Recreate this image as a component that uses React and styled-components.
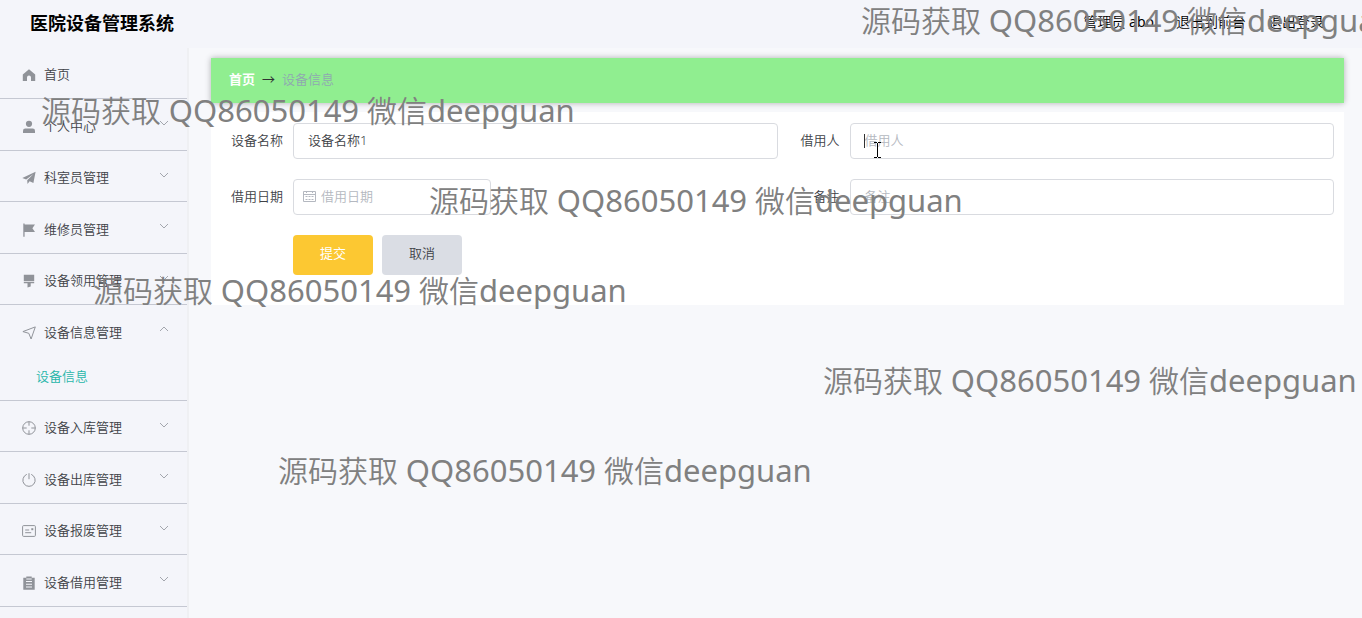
import React from "react";
import styled, { createGlobalStyle, css } from "styled-components";

const GlobalStyle = createGlobalStyle`
  * {
    box-sizing: border-box;
  }

  body {
    margin: 0;
    background: #f7f8fb;
    color: #404247;
    font-family: "Noto Sans", "Noto Sans CJK SC", sans-serif;
    font-size: 13px;
  }

  button,
  input {
    font: inherit;
  }

  a {
    color: inherit;
    text-decoration: none;
  }
`;

const Page = styled.div`
  position: relative;
  display: flex;
  flex-direction: column;
  min-height: 100vh;
  overflow: hidden;
`;

const Header = styled.header`
  display: flex;
  justify-content: space-between;
  align-items: center;
  height: 48px;
  padding: 0 38px 2px 30px;
  background: #f4f5fa;
  color: #000;
`;

const Title = styled.h1`
  margin: 0;
  font-size: 18px;
  line-height: 24px;
  font-weight: 700;
`;

const UserNav = styled.nav`
  display: flex;
  gap: 22px;
  padding-bottom: 2px;
  font-size: 14px;
  line-height: 20px;
  font-weight: 350;

  b {
    font-weight: 400;
  }
`;

const Body = styled.div`
  display: flex;
  flex: 1;
`;

const Sidebar = styled.aside`
  flex: none;
  width: 189px;
  background: #f4f5fa;
  border-right: 2px solid #eff0f3;
`;

const Menu = styled.ul`
  margin: 0;
  padding: 0;
  list-style: none;
`;

const MenuItem = styled.li`
  --row: 50px;
  border-bottom: 1px solid #c5c8d2;

  &:nth-child(even) {
    --row: 51px;
  }
`;

const MenuLink = styled.a`
  display: flex;
  align-items: center;
  height: var(--row);
  padding: 1px 18px 0 22px;
  font-weight: 350;

  .icon {
    flex: none;
    width: 14px;
    height: 14px;
    margin: 3px 8px 0 0;
    color: #909399;
  }

  .arrow {
    width: 10px;
    height: 10px;
    margin: 0 0 4px auto;
    color: #a3a6ad;
  }
`;

const SubLink = styled.a`
  display: block;
  height: 44px;
  padding-left: 36px;
  line-height: 40px;
  font-weight: 350;
  color: #27b5a9;
`;

const Main = styled.main`
  flex: 1;
  min-width: 0;
  padding: 10px 18px 10px 22px;
`;

const Breadcrumb = styled.nav`
  display: flex;
  align-items: center;
  gap: 7px;
  height: 45px;
  padding: 0 18px 4px;
  margin-bottom: 9px;
  background: #90ee90;
  box-shadow: 0 0 6px rgba(0, 0, 0, 0.3);
  color: #303133;

  a {
    color: #fff;
    font-weight: 700;
  }

  .current {
    color: #8fa8b0;
    font-weight: 350;
  }
`;

const Form = styled.form`
  display: grid;
  grid-template-columns: repeat(2, minmax(0, 1fr));
  row-gap: 20px;
  padding: 11px 10px 30px;
  background: #fff;
`;

const Field = styled.div`
  display: flex;
  align-items: center;
`;

const Label = styled.label`
  flex: none;
  width: 72px;
  padding: 0 10px 3px 0;
  text-align: right;
  font-weight: 350;
`;

const Control = styled.div`
  position: relative;
  flex: ${({ $short }) => ($short ? "0 1 198px" : "1")};

  .calendar {
    position: absolute;
    top: 11px;
    left: 10px;
    width: 13px;
    height: 13px;
    color: #b4b8c0;
  }
`;

const Input = styled.input`
  display: block;
  width: 100%;
  height: 36px;
  padding: 0 14px 3px;
  border: 1px solid #d9dbe0;
  border-radius: 4px;
  outline: none;
  background: #fff;
  color: #404247;
  font-weight: 350;

  ${({ $icon }) =>
    $icon &&
    css`
      padding-left: 27px;
    `}

  &::placeholder {
    color: #b4b8c0;
    opacity: 1;
  }
`;

const Caret = styled.span`
  position: absolute;
  top: 11px;
  left: 14px;
  width: 1px;
  height: 14px;
  background: #303133;
`;

const Pointer = styled.svg`
  position: absolute;
  top: 19px;
  left: 24px;
  width: 7px;
  height: 16px;
`;

const Actions = styled.div`
  grid-column: 1 / -1;
  display: flex;
  gap: 9px;
  padding-left: 72px;
`;

const Button = styled.button`
  width: 80px;
  height: 40px;
  padding: 0 0 5px;
  border: 0;
  border-radius: 4px;
  background: ${({ $primary }) => ($primary ? "#fcc832" : "#dadde4")};
  color: ${({ $primary }) => ($primary ? "#fff" : "#404247")};
  font-weight: ${({ $primary }) => ($primary ? 400 : 350)};
`;

const Watermarks = styled.div`
  position: absolute;
  inset: 0;
  overflow: hidden;
  pointer-events: none;
`;

const Mark = styled.span`
  position: absolute;
  top: ${({ $top }) => $top}px;
  left: ${({ $left }) => $left}px;
  color: #808080;
  font-size: 30px;
  line-height: 40px;
  font-weight: 350;
  white-space: nowrap;

  /* latin part is a bit larger than the chinese glyphs */
  b {
    font-size: 31px;
    font-weight: 400;
  }
`;

const stroke = { fill: "none", stroke: "currentColor" };

const icons = {
  home: <path fill="currentColor" d="M7 1.2 13.2 6.6V13H9V9.5a2 2 0 0 0-4 0V13H.8V6.6z" />,
  user: (
    <g fill="currentColor">
      <circle cx="7" cy="3.8" r="3.1" />
      <path d="M1 13v-2.3Q1 8.5 3.3 8.5h7.4Q13 8.5 13 10.7V13z" />
    </g>
  ),
  plane: (
    <path fill="currentColor" d="M13.6.8 11.4 12 7.6 10.2 5.5 13 5.2 9.2 11.5 3 4.2 8.5.3 7z" />
  ),
  flag: <path fill="currentColor" d="M1.3.6h1.3v1H13l-2.6 3.7L13 9H2.6v4.8H1.3z" />,
  brush: (
    <path fill="currentColor" d="M1.8.7h10.4v6.2H1.8zM1.8 7.8h10.4v1.4H8.7v3.3L5.5 13.6V9.2H1.8z" />
  ),
  position: <path {...stroke} strokeLinejoin="round" d="M13.3.9 9.1 13 6.8 7.3.9 5.6z" />,
  aim: (
    <g {...stroke}>
      <circle cx="7" cy="7" r="6.3" />
      <path d="M7 .7v4M7 9.3v4M.7 7h4M9.3 7h4" />
    </g>
  ),
  power: (
    <g {...stroke} strokeLinecap="round">
      <path d="M4.4 1.5a6.2 6.2 0 1 0 5.2 0" />
      <path d="M7 .6v5.2" />
    </g>
  ),
  postcard: (
    <g {...stroke}>
      <rect x=".6" y="1.6" width="12.8" height="10.8" rx="1" />
      <path d="M3.2 6h4M3.2 8.7h6" />
      <path d="M9.3 5.2h2" strokeWidth="2" />
    </g>
  ),
  order: (
    <path
      fill="currentColor"
      fillRule="evenodd"
      d="M4.3.4h5.4v1.3h3v12H1.3v-12h3zM4 5v1h6V5zM4 7.7v1h6v-1zM4 10.4v1h6v-1zM4.3 2.6v.8h5.4v-.8z"
    />
  ),
};

const menu = [
  { icon: "home", label: "首页", leaf: true },
  { icon: "user", label: "个人中心" },
  { icon: "plane", label: "科室员管理" },
  { icon: "flag", label: "维修员管理" },
  { icon: "brush", label: "设备领用管理" },
  { icon: "position", label: "设备信息管理", children: ["设备信息"] },
  { icon: "aim", label: "设备入库管理" },
  { icon: "power", label: "设备出库管理" },
  { icon: "postcard", label: "设备报废管理" },
  { icon: "order", label: "设备借用管理" },
];

const marks = [
  { left: 861, top: 0 },
  { left: 41, top: 90 },
  { left: 429, top: 180 },
  { left: 93, top: 270 },
  { left: 823, top: 360 },
  { left: 278, top: 450 },
];

function Arrow({ open }) {
  return (
    <svg className="arrow" viewBox="0 0 10 10" aria-hidden="true">
      <path {...stroke} d={open ? "M1 7l4-4 4 4" : "M1 3l4 4 4-4"} />
    </svg>
  );
}

function CalendarIcon() {
  return (
    <svg className="calendar" viewBox="0 0 13 13" aria-hidden="true">
      <g {...stroke}>
        <path d="M.5 1.5h12v10H.5zM.5 4.5h12M3.5 1v2M9.5 1v2" />
        <path d="M2.5 6.5h8M2.5 9.5h8" strokeDasharray="2 1" />
      </g>
    </svg>
  );
}

function App() {
  return (
    <Page>
      <GlobalStyle />
      <Header>
        <Title>医院设备管理系统</Title>
        <UserNav>
          <span>
            管理员 <b>abo</b>
          </span>
          <a href="#front">退出到前台</a>
          <a href="#logout">退出登录</a>
        </UserNav>
      </Header>

      <Body>
        <Sidebar>
          <Menu>
            {menu.map((item) => (
              <MenuItem key={item.label}>
                <MenuLink href="#menu">
                  <svg className="icon" viewBox="0 0 14 14" aria-hidden="true">
                    {icons[item.icon]}
                  </svg>
                  {item.label}
                  {!item.leaf && <Arrow open={Boolean(item.children)} />}
                </MenuLink>
                {item.children?.map((child) => (
                  <SubLink key={child} href="#child">
                    {child}
                  </SubLink>
                ))}
              </MenuItem>
            ))}
          </Menu>
        </Sidebar>

        <Main>
          <Breadcrumb>
            <a href="#home">首页</a>
            <span>→</span>
            <span className="current">设备信息</span>
          </Breadcrumb>

          <Form onSubmit={(e) => e.preventDefault()}>
            <Field>
              <Label htmlFor="name">设备名称</Label>
              <Control>
                <Input id="name" defaultValue="设备名称1" />
              </Control>
            </Field>
            <Field>
              <Label htmlFor="borrower">借用人</Label>
              <Control>
                <Input id="borrower" placeholder="借用人" />
                <Caret />
                <Pointer viewBox="0 0 7 16" aria-hidden="true">
                  <path d="M0 .5h3M4 .5h3M3.5 1v14M0 15.5h3M4 15.5h3" fill="none" stroke="#000" />
                </Pointer>
              </Control>
            </Field>
            <Field>
              <Label htmlFor="date">借用日期</Label>
              <Control $short>
                <Input id="date" placeholder="借用日期" $icon />
                <CalendarIcon />
              </Control>
            </Field>
            <Field>
              <Label htmlFor="remark">备注</Label>
              <Control>
                <Input id="remark" placeholder="备注" />
              </Control>
            </Field>
            <Actions>
              <Button type="submit" $primary>
                提交
              </Button>
              <Button type="button">取消</Button>
            </Actions>
          </Form>
        </Main>
      </Body>

      <Watermarks aria-hidden="true">
        {marks.map((mark) => (
          <Mark key={mark.top} $left={mark.left} $top={mark.top}>
            源码获取 <b>QQ86050149</b> 微信<b>deepguan</b>
          </Mark>
        ))}
      </Watermarks>
    </Page>
  );
}

export default App;
